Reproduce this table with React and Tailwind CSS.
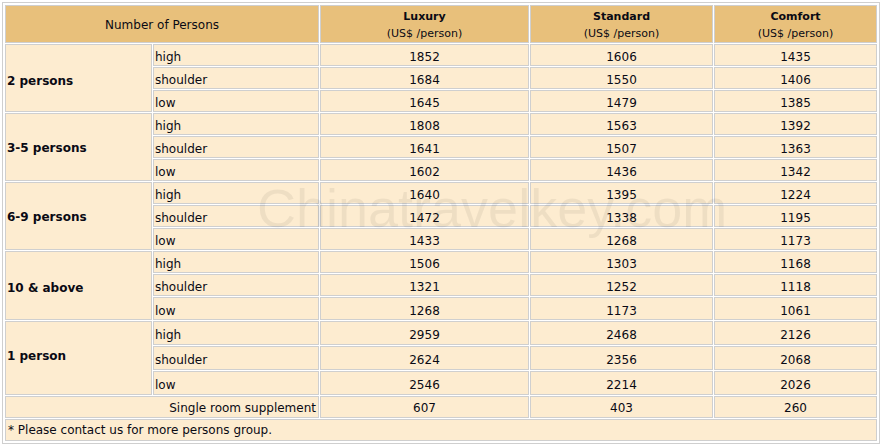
const GROUPS = [
  { label: '2 persons', pad: 'pt-[6px]', rows: [['high', 1852, 1606, 1435], ['shoulder', 1684, 1550, 1406], ['low', 1645, 1479, 1385]] },
  { label: '3-5 persons', pad: 'pt-[2px]', rows: [['high', 1808, 1563, 1392], ['shoulder', 1641, 1507, 1363], ['low', 1602, 1436, 1342]] },
  { label: '6-9 persons', pad: 'pt-[2px]', rows: [['high', 1640, 1395, 1224], ['shoulder', 1472, 1338, 1195], ['low', 1433, 1268, 1173]] },
  { label: '10 & above', pad: 'pt-[4px]', rows: [['high', 1506, 1303, 1168], ['shoulder', 1321, 1252, 1118], ['low', 1268, 1173, 1061]] },
  { label: '1 person', pad: 'pb-[4px]', rows: [['high', 2959, 2468, 2126], ['shoulder', 2624, 2356, 2068], ['low', 2546, 2214, 2026]] },
];

// row heights (border-box) so the pitch follows the screenshot
const HEIGHTS = [
  'h-[22px]', 'h-[22px]', 'h-[22px]',
  'h-[22px]', 'h-[22px]', 'h-[22px]',
  'h-[22px]', 'h-[22px]', 'h-[22px]',
  'h-[22px]', 'h-[22px]', 'h-[23px]',
  'h-[24px]', 'h-[24px]', 'h-[24px]',
];

const cell = 'border border-[#cfcfcf] bg-[#fdecd0] px-[1px]';
const num = `${cell} pt-[4px] pb-0 leading-[14px]`;
const head = 'border border-[#cfcfcf] bg-[#e8c07b] px-[1px] pt-[2px] pb-0 text-center';

function Header({ name }) {
  return (
    <th className={`${head} text-[11px] leading-[17px]`}>
      <div className="font-bold">{name}</div>
      <div className="font-normal">(US$ /person)</div>
    </th>
  );
}

export default function App() {
  return (
    <div className="relative bg-white pl-[2px] pt-[2px] font-['DejaVu_Sans',Verdana,sans-serif] text-[12px] text-[#0a0a14]">
      <table className="w-[878px] table-fixed border-separate border-spacing-px border border-[#cfcfcf] p-px">
        <colgroup>
          <col className="w-[147px]" />
          <col className="w-[166px]" />
          <col className="w-[209px]" />
          <col className="w-[183px]" />
          <col className="w-[163px]" />
        </colgroup>
        <thead>
          <tr className="h-[38px]">
            <th colSpan={2} className={`${head} text-[12px] font-normal`}>Number of Persons</th>
            <Header name="Luxury" />
            <Header name="Standard" />
            <Header name="Comfort" />
          </tr>
        </thead>
        <tbody>
          {GROUPS.map((g, gi) =>
            g.rows.map((r, ri) => (
              <tr key={g.label + r[0]} className={HEIGHTS[gi * 3 + ri]}>
                {ri === 0 && (
                  <td rowSpan={3} className={`${cell} ${g.pad} text-left font-bold`}>{g.label}</td>
                )}
                <td className={`${num} text-left`}>{r[0]}</td>
                <td className={`${num} text-center`}>{r[1]}</td>
                <td className={`${num} text-center`}>{r[2]}</td>
                <td className={`${num} text-center`}>{r[3]}</td>
              </tr>
            ))
          )}
          <tr className="h-[22px]">
            <td colSpan={2} className={`${cell} pt-[2px] pb-0 pr-[2px] leading-[14px] text-right`}>Single room supplement</td>
            <td className={`${cell} pt-[2px] pb-0 leading-[14px] text-center`}>607</td>
            <td className={`${cell} pt-[2px] pb-0 leading-[14px] text-center`}>403</td>
            <td className={`${cell} pt-[2px] pb-0 leading-[14px] text-center`}>260</td>
          </tr>
          <tr className="h-[22px]">
            <td colSpan={5} className={`${cell} py-0 pl-[2px] leading-[14px] text-left`}>* Please contact us for more persons group.</td>
          </tr>
        </tbody>
      </table>

      {/* watermark over the table */}
      <span className="pointer-events-none absolute left-[257px] top-[181px] font-['Liberation_Sans',Arial,sans-serif] text-[54px] leading-none text-black/[0.06]">
        Chinatravelkey.com
      </span>
    </div>
  );
}
